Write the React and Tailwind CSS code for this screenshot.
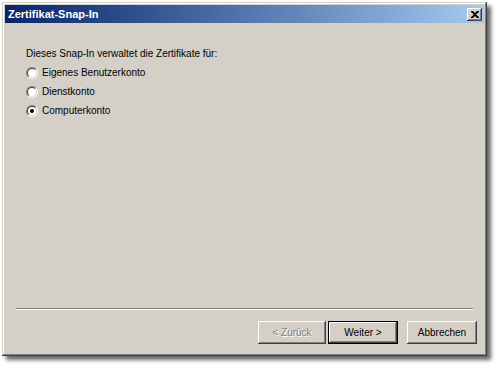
import React from 'react';

const font = { fontFamily: '"Liberation Sans", Arial, sans-serif' };

const Radio = ({ checked, label }) => (
  <div className="flex items-center h-[19px]">
    <div className="w-[12px] h-[12px] rounded-full border border-t-[#808080] border-l-[#808080] border-r-white border-b-white">
      <div className="w-full h-full rounded-full border border-t-[#404040] border-l-[#404040] border-r-[#d4d0c8] border-b-[#d4d0c8] bg-white flex items-center justify-center">
        {checked && <div className="w-[4px] h-[4px] rounded-full bg-black"></div>}
      </div>
    </div>
    <span className="ml-[4px] text-[10px] text-black">{label}</span>
  </div>
);

const Button = ({ children, disabled, focused, className }) => (
  <div className={`h-[23px] ${focused ? 'border border-black' : ''} ${className}`}>
    <div className="w-full h-full flex items-center justify-center text-[10px] shadow-[inset_-1px_-1px_#404040,inset_1px_1px_#fff,inset_-2px_-2px_#808080,inset_2px_2px_#d4d0c8]">
      <span className={disabled ? 'text-[#808080] [text-shadow:1px_1px_#fff]' : 'text-black'}>{children}</span>
    </div>
  </div>
);

export default function App() {
  return (
    <div className="w-[500px] h-[368px] bg-white pt-[2px] pl-[2px]" style={font}>
      <div className="w-[485px] h-[354px] bg-[#d4d0c8] p-[3px] flex flex-col shadow-[inset_-1px_-1px_#404040,inset_1px_1px_#d4d0c8,inset_-2px_-2px_#808080,inset_2px_2px_#fff,4px_4px_4px_rgba(0,0,0,0.6)]">
        {/* title bar */}
        <div className="h-[18px] flex items-center justify-between pl-[3px] pr-[2px] bg-gradient-to-r from-[#0a246a] to-[#a6caf0]">
          <span className="text-white font-bold text-[11px]">Zertifikat-Snap-In</span>
          <div className="w-[15px] h-[13px] bg-[#d4d0c8] flex items-center justify-center shadow-[inset_-1px_-1px_#404040,inset_1px_1px_#fff,inset_-2px_-2px_#808080]">
            <svg width="8" height="7" viewBox="0 0 8 7">
              <path d="M0 0h2l2 2 2-2h2v1L5 3.5 8 6v1H6L4 5 2 7H0V6l3-2.5L0 1z" fill="#000" />
            </svg>
          </div>
        </div>

        {/* content */}
        <div className="flex-1 pt-[21px] pl-[21px]">
          <div className="text-[10px] text-black h-[19px] flex items-center">Dieses Snap-In verwaltet die Zertifikate für:</div>
          <Radio label="Eigenes Benutzerkonto" />
          <Radio label="Dienstkonto" />
          <Radio checked label="Computerkonto" />
        </div>

        {/* separator */}
        <div className="mx-[11px] border-t border-t-[#808080] border-b border-b-white"></div>

        {/* buttons */}
        <div className="flex justify-end pr-[7px] pt-[11px] pb-[9px]">
          <Button disabled className="w-[68px]">&lt; Zurück</Button>
          <Button focused className="w-[70px] ml-[2px]">Weiter &gt;</Button>
          <Button className="w-[70px] ml-[9px]">Abbrechen</Button>
        </div>
      </div>
    </div>
  );
}
